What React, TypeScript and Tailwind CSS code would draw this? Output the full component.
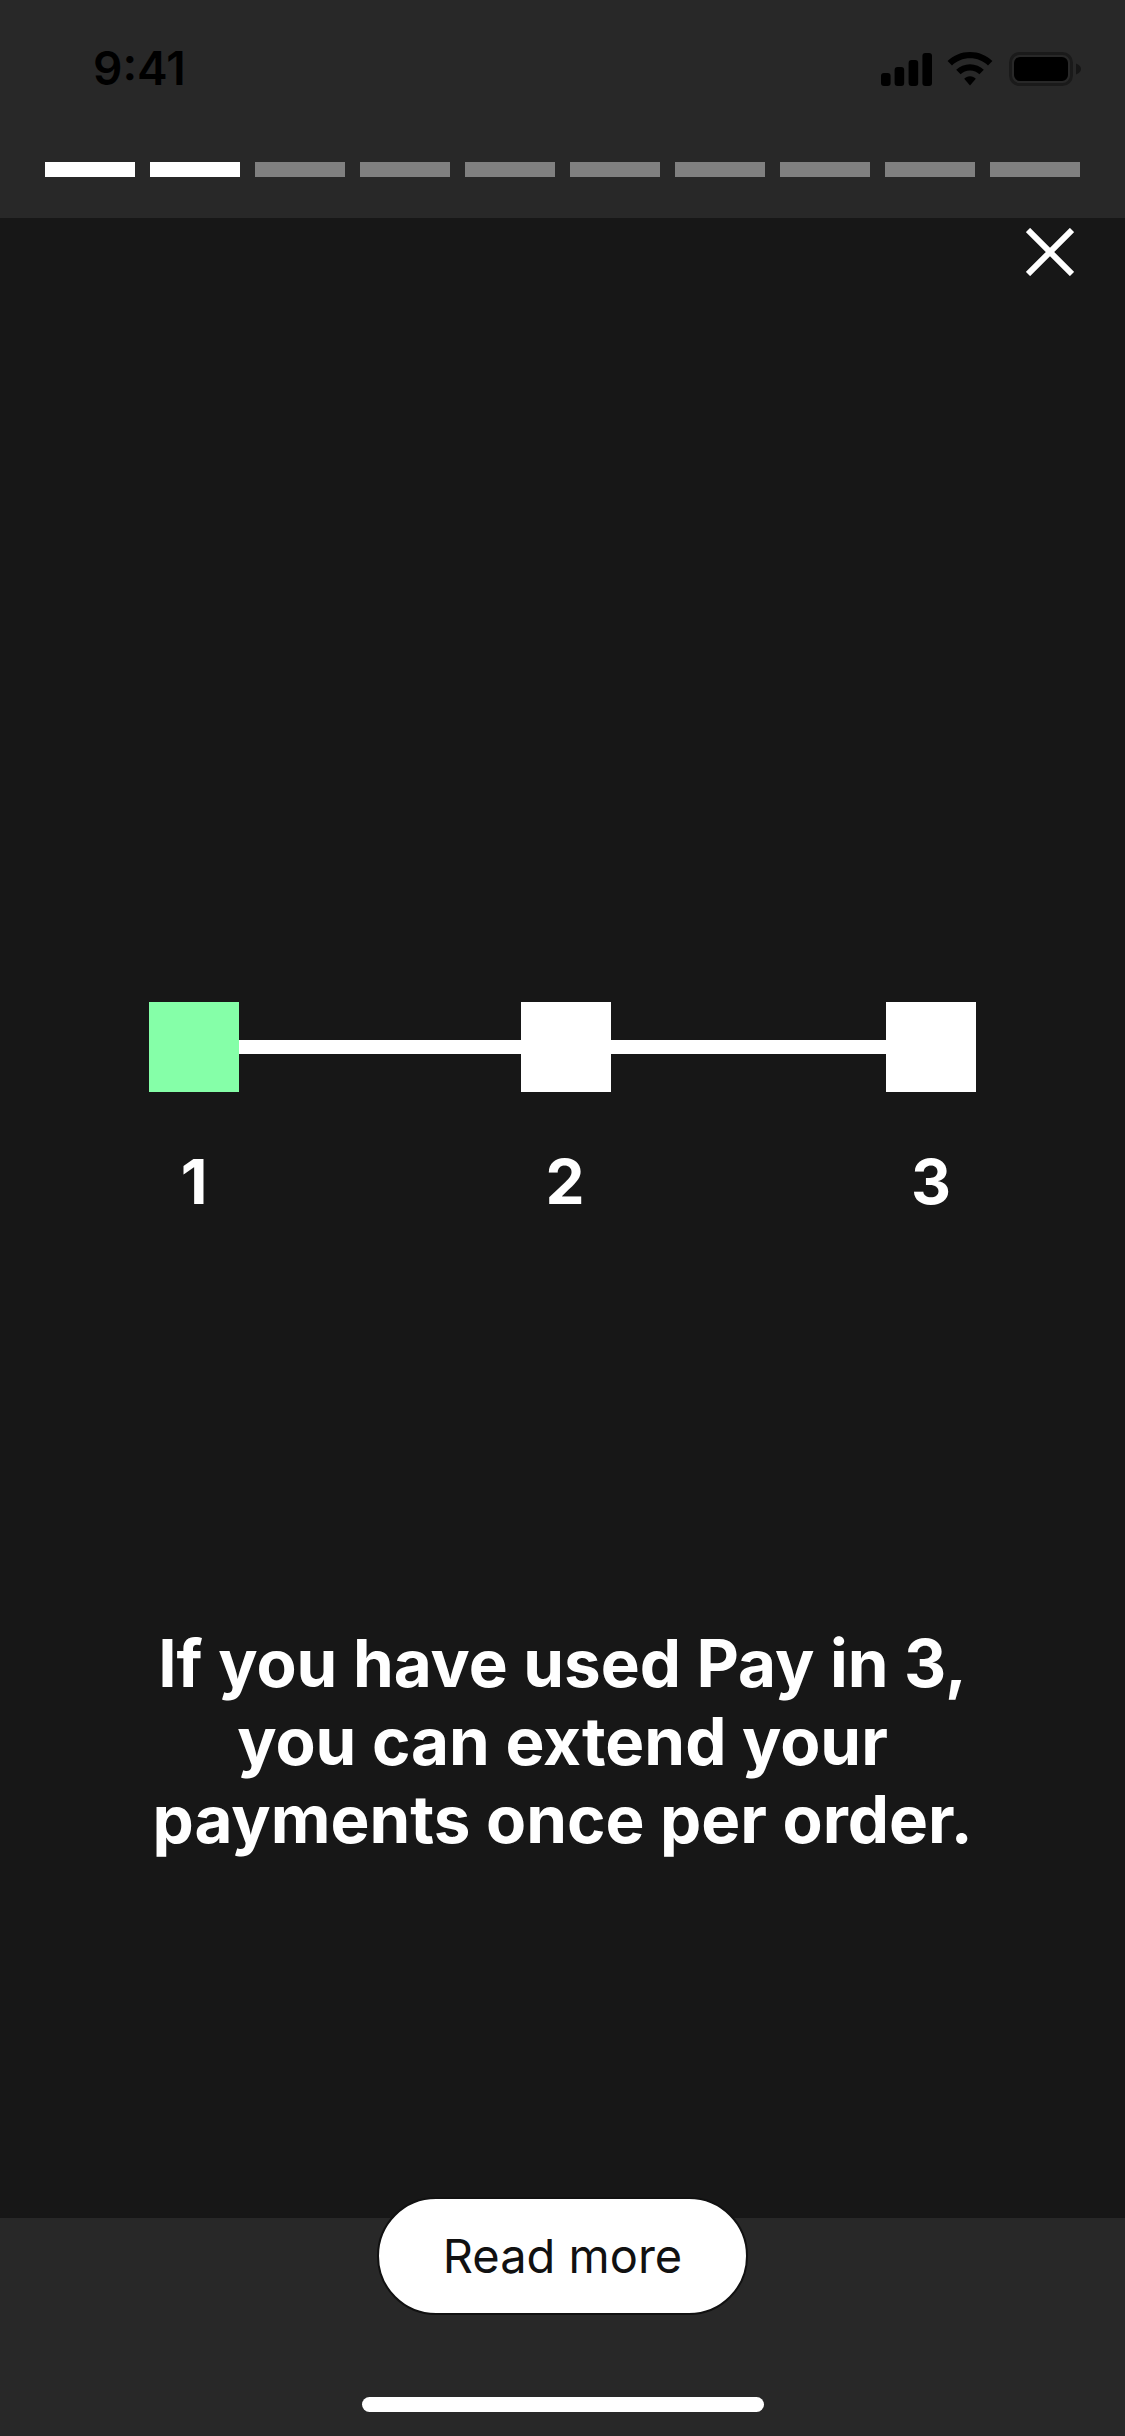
import React from 'react'

const progress = [true, true, false, false, false, false, false, false, false, false]

const StatusIcons = () => (
  <div className="flex items-center">
    <svg width="51" height="33" viewBox="0 0 51 33" fill="#000">
      <rect x="0" y="20" width="9.600" height="13" rx="3" />
      <rect x="13.600" y="14" width="9.600" height="19" rx="3" />
      <rect x="27.600" y="7" width="9.600" height="26" rx="3" />
      <rect x="41.400" y="0" width="9.600" height="33" rx="3" />
    </svg>
    <svg className="ml-[15px]" width="46" height="34" viewBox="0 0 46 34" fill="#000">
      <path d="M23 0C14.300 0 6.400 3.400 0.600 9L5 13.500C9.700 9 16 6.300 23 6.300C30 6.300 36.300 9 41 13.500L45.400 9C39.600 3.400 31.700 0 23 0Z" />
      <path d="M23 12.200C17.600 12.200 12.700 14.300 9.200 17.800L13.600 22.300C16 19.900 19.300 18.500 23 18.500C26.700 18.500 30 19.900 32.400 22.300L36.800 17.800C33.300 14.300 28.400 12.200 23 12.200Z" />
      <path d="M23 24.300C20.600 24.300 18.600 25.200 17.200 26.700L23 33.500L28.800 26.700C27.400 25.200 25.400 24.300 23 24.300Z" />
    </svg>
    <svg className="ml-[16px]" width="73" height="34" viewBox="0 0 73 34" fill="none">
      <rect x="1.500" y="1.500" width="61" height="31" rx="9" stroke="#000" strokeOpacity="0.35" strokeWidth="3" />
      <rect x="5" y="5" width="54" height="24" rx="6" fill="#000" />
      <path d="M67 11.500C70 12.500 72 14.500 72 17C72 19.500 70 21.500 67 22.500Z" fill="#000" fillOpacity="0.45" />
    </svg>
  </div>
)

const CloseIcon = () => (
  <svg width="48" height="48" viewBox="0 0 48 48" stroke="#fff" strokeWidth="6" fill="none">
    <path d="M2 2L46 46M46 2L2 46" />
  </svg>
)

export default function App() {
  return (
    <div className="w-[1125px] h-[2436px] flex flex-col overflow-hidden bg-[#171717] font-['Inter',sans-serif]">
      {/* Status bar and story progress */}
      <header className="h-[218px] shrink-0 bg-[#282828] px-[45px]">
        <div className="h-[162px] flex items-start justify-between">
          <span className="ml-[48px] mt-[40px] text-[46px] leading-[56px] font-semibold text-black">9:41</span>
          <div className="mt-[52px] mr-[-2px]">
            <StatusIcons />
          </div>
        </div>
        <div className="flex gap-[15px]">
          {progress.map((done, i) => (
            <div key={i} className={`h-[15px] w-[90px] ${done ? 'bg-white' : 'bg-[#808080]'}`} />
          ))}
        </div>
      </header>

      <main className="flex-1 flex flex-col">
        <div className="flex justify-end pt-[10px] pr-[51px]">
          <CloseIcon />
        </div>

        {/* Payment steps */}
        <div className="mt-[726px] ml-[149px] flex items-center">
          <div className="w-[90px] h-[90px] bg-[#85ffa8]" />
          <div className="w-[282px] h-[14px] bg-white" />
          <div className="w-[90px] h-[90px] bg-white" />
          <div className="w-[275px] h-[14px] bg-white" />
          <div className="w-[90px] h-[90px] bg-white" />
        </div>
        <div className="mt-[50px] ml-[149px] flex text-[62px] leading-[80px] font-bold text-white text-center">
          <span className="w-[90px]">1</span>
          <span className="ml-[281px] w-[90px]">2</span>
          <span className="ml-[276px] w-[90px]">3</span>
        </div>

        <p className="mt-[403px] text-center text-[65.5px] leading-[78px] font-bold text-white">
          If you have used Pay in 3,
          <br />
          you can extend your
          <br />
          payments once per order.
        </p>
      </main>

      <footer className="h-[218px] shrink-0 bg-[#282828] flex flex-col items-center">
        <button className="-mt-[21px] w-[371px] h-[118px] rounded-full bg-white border-[2px] border-[#111] text-[47px] font-normal text-[#111]">
          Read more
        </button>
        <div className="mt-[82px] w-[402px] h-[15px] rounded-full bg-white" />
      </footer>
    </div>
  )
}
